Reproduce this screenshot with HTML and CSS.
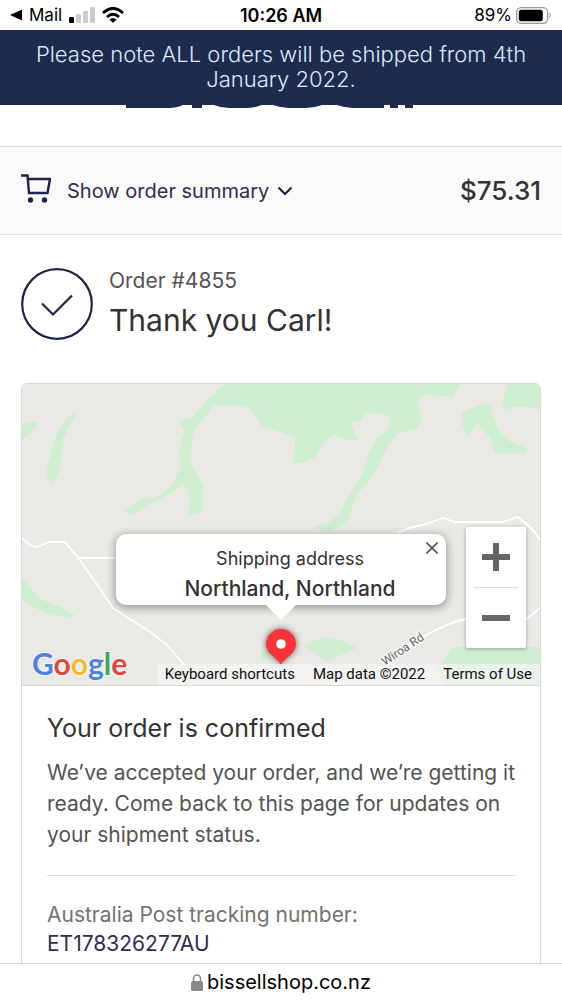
FILE: index.html
```html
<!DOCTYPE html>
<html lang="en">
<head>
  <meta charset="UTF-8" />
  <meta name="viewport" content="width=device-width, initial-scale=1.0" />
  <title>Thank you Carl! - Order #4855</title>
  <link rel="stylesheet" href="styles.css">
</head>
<body>
  <div class="statusbar">
    <div class="status-left">
      <svg width="12" height="12" viewBox="0 0 12 12"><path d="M0 6 L12 0.5 V11.500 Z" fill="#000"/></svg>
      <span>Mail</span>
      <svg class="signal" width="26" height="16" viewBox="0 0 26 16">
        <rect x="0" y="10" width="5" height="6" rx="1" fill="#000"/>
        <rect x="7" y="7" width="5" height="9" rx="1" fill="#ccc"/>
        <rect x="14" y="4" width="5" height="12" rx="1" fill="#ccc"/>
        <rect x="21" y="0" width="5" height="16" rx="1" fill="#ccc"/>
      </svg>
      <svg width="22" height="16" viewBox="0 0 22 16" fill="none" stroke="#000" stroke-width="3">
        <path d="M1 6 Q11 -3 21 6"/>
        <path d="M5 10 Q11 4.500 17 10"/>
        <path d="M11 16 L7.500 12.500 Q11 9.800 14.500 12.500 Z" fill="#000" stroke="none"/>
      </svg>
    </div>
    <div class="clock">10:26 AM</div>
    <div class="status-right">
      <span>89%</span>
      <svg width="36" height="17" viewBox="0 0 36 17">
        <rect x="0.700" y="0.700" width="31" height="15.600" rx="4.500" fill="none" stroke="#999" stroke-width="1.300"/>
        <rect x="2.800" y="2.800" width="24" height="11.400" rx="2.500" fill="#000"/>
        <path d="M33.500 5.500 Q35.800 8.500 33.500 11.500 Z" fill="#999"/>
      </svg>
    </div>
  </div>

  <main class="page">
    <div class="notice">Please note ALL orders will be shipped from 4th January 2022.</div>
    <header class="brand">
      <svg width="290" height="4" viewBox="0 0 290 4" fill="#1d2b4f">
        <path d="M1 0 H58 Q52 3 44 3 H1 Z"/>
        <path d="M67 0 H77 V3 H67 Z"/>
        <path d="M89 0 H137 Q129 3 121 3 H104 Q96 3 89 0 Z"/>
        <path d="M148 0 H197 Q189 3 181 3 H164 Q156 3 148 0 Z"/>
        <path d="M212 0 H259 V3 H228 Q220 3 212 0 Z"/>
        <path d="M265 0 H273 V3 H265 Z"/>
        <path d="M280 0 H288 V3 H280 Z"/>
      </svg>
    </header>

    <button class="summary" type="button">
      <svg class="cart" width="30" height="30" viewBox="0 0 30 30" fill="none" stroke="#1d2450" stroke-width="2.400">
        <path d="M0 1.500 H6.500 L8 19 H26.500 L29 5 H7"/>
        <circle cx="9.500" cy="26" r="2.700" fill="#1d2450" stroke="none"/>
        <circle cx="23.500" cy="26" r="2.700" fill="#1d2450" stroke="none"/>
      </svg>
      <span class="summary-label">Show order summary</span>
      <svg width="16" height="10" viewBox="0 0 16 10" fill="none" stroke="#1d2450" stroke-width="2.200"><path d="M1.500 1.500 L8 8 L14.500 1.500"/></svg>
      <span class="total">$75.31</span>
    </button>

    <div class="thanks">
      <svg width="72" height="72" viewBox="0 0 72 72" fill="none" stroke="#1f2547" stroke-width="2.200">
        <circle cx="36" cy="36" r="34.800"/>
        <path d="M21 35.500 L32 46.500 L51 27.500"/>
      </svg>
      <div>
        <p class="order-number">Order #4855</p>
        <h1>Thank you Carl!</h1>
      </div>
    </div>

    <section class="card">
      <div class="map">
        <svg class="terrain" viewBox="22 384 518 301" preserveAspectRatio="xMidYMid slice">
          <g fill="#cdeecf">
            <path d="M22 424 L35 421 L38 424 L31 433 L22 439 Z"/>
            <path d="M76 414 L70 425 L64 437 L61 456 L60 468 L54 484 L48 479 L46 469 L52 450 L55 438 L62 425 L73 412 Z"/>
            <path d="M225 384 H461 L453 397 L440 396 L423 394 L417 403 L422 417 L418 428 L397 434 L387 447 L377 468 L368 483 L358 493 L352 508 L347 523 L330 531 L313 527 L330 522 L340 512 L350 493 L362 475 L368 455 L377 437 L388 430 L391 417 L380 413 L365 413 L362 420 L350 423 L358 440 L350 441 L335 435 L323 443 L315 457 L305 462 L293 463 L295 447 L295 437 L280 432 L263 427 L250 408 L230 405 L213 406 L193 433 L190 455 L192 467 L203 485 L202 513 L187 515 L190 502 L188 490 L183 485 L162 499 L147 505 L133 515 L123 512 L142 498 L157 498 L173 483 L180 468 L179 450 L185 430 L178 421 L192 418 L207 400 Z"/>
            <path d="M462 412 L487 403 L491 408 L497 427 L507 440 L528 449 L525 453 H495 L490 438 L478 423 L468 437 L461 422 Z"/>
            <path d="M507 384 H540 V410 Q522 403 503 410 L504 395 Z"/>
            <path d="M22 578 L33 590 L38 598 L60 607 L75 615 L67 618 L43 612 L22 600 Z"/>
            <path d="M303 646 L323 637 L338 639 L357 648 L327 661 Z"/>
            <path d="M261 652 L268 648 L270 658 L262 660 Z"/>
            <path d="M453 647 H540 V685 H445 L436 671 Z"/>
          </g>
          <g fill="none" stroke="#fff" stroke-width="1.800" stroke-linejoin="round">
            <path d="M22 538 L30 545 L37 547 L50 542 H65 L80 560 L113 608 L150 632 L167 645 L185 666"/>
            <path d="M79 558 H118"/>
            <path d="M397 533 Q410 527 423 525 L443 518 L455 522 H503 L518 517 L530 527 Q536 533 540 540"/>
            <path d="M540 608 L527 619 Q495 612 465 619 Q445 624 423 637 L383 664"/>
          </g>
          <text class="road" x="385" y="666" transform="rotate(-34 385 666)">Wiroa Rd</text>
        </svg>

        <svg class="pin" width="40" height="44" viewBox="0 0 40 44">
          <path d="M20 38 C17 31 5 27 5 17 A15 15 0 0 1 35 17 C35 27 23 31 20 38 Z" fill="#fb3237"/>
          <circle cx="20" cy="17" r="4.800" fill="#fff"/>
        </svg>

        <div class="bubble">
          <p class="bubble-label">Shipping address</p>
          <p class="bubble-place">Northland, Northland</p>
          <button class="close" type="button" aria-label="Close">
            <svg width="12" height="12" viewBox="0 0 12 12" stroke="#555" stroke-width="1.600"><path d="M0.500 0.500 L11.500 11.500 M11.500 0.500 L0.500 11.500"/></svg>
          </button>
        </div>

        <div class="zoom">
          <button type="button" aria-label="Zoom in">
            <svg width="28" height="28" viewBox="0 0 28 28" fill="#666"><path d="M11 0 H17 V11 H28 V17 H17 V28 H11 V17 H0 V11 H11 Z"/></svg>
          </button>
          <button type="button" aria-label="Zoom out">
            <svg width="28" height="28" viewBox="0 0 28 28" fill="#666"><path d="M0 11 H28 V17 H0 Z"/></svg>
          </button>
        </div>

        <a class="google" href="#"><span class="blue">G</span><span class="red">o</span><span class="yellow">o</span><span class="blue">g</span><span class="green">l</span><span class="red">e</span></a>

        <div class="attribution">
          <button type="button">Keyboard shortcuts</button>
          <span>Map data ©2022</span>
          <a href="#">Terms of Use</a>
        </div>
      </div>

      <div class="card-body">
        <h2>Your order is confirmed</h2>
        <p class="message">We’ve accepted your order, and we’re getting it ready. Come back to this page for updates on your shipment status.</p>
        <div class="tracking">
          <p class="tracking-label">Australia Post tracking number:</p>
          <a href="#">ET178326277AU</a>
        </div>
      </div>
    </section>
  </main>

  <footer class="urlbar">
    <svg width="12" height="17" viewBox="0 0 12 17">
      <path d="M2.500 8 V4.500 A3.500 3.500 0 0 1 9.500 4.500 V8" fill="none" stroke="#8a8a8a" stroke-width="1.500"/>
      <rect x="0" y="7" width="12" height="10" rx="1.500" fill="#8a8a8a"/>
    </svg>
    <span>bissellshop.co.nz</span>
  </footer>
</body>
</html>
```
FILE: styles.css
```css
* {
  box-sizing: border-box;
}
body {
  margin: 0;
  height: 100vh;
  display: flex;
  flex-direction: column;
  overflow: hidden;
  background: #fff;
  color: #333;
  font-family: Inter, "Liberation Sans", sans-serif;
  font-size: 20px;
}
h1, h2, p {
  margin: 0;
  font-weight: 400;
}
a {
  color: inherit;
  text-decoration: none;
}
button {
  margin: 0;
  padding: 0;
  border: none;
  background: none;
  color: inherit;
  font: inherit;
  cursor: pointer;
}
svg {
  display: block;
  flex: none;
}

/* Phone status bar */
.statusbar {
  flex: none;
  display: grid;
  grid-template-columns: 1fr auto 1fr;
  align-items: center;
  height: 30px;
  padding: 0 10px;
  color: #000;
  font-size: 17px;
}
.status-left,
.status-right {
  display: flex;
  align-items: center;
  gap: 7px;
}
.status-right {
  justify-content: flex-end;
  gap: 4px;
}
.clock {
  font-size: 18px;
  font-weight: 600;
}

.page {
  flex: 1;
  min-height: 0;
  overflow: hidden;
}
.notice {
  padding: 12px 20px 13px;
  background: #1d2b4f;
  color: #dfe8fb;
  font-size: 22px;
  font-weight: 300;
  line-height: 25px;
  text-align: center;
}
.brand {
  display: flex;
  justify-content: center;
  height: 41px;
  padding-right: 22px;
}

/* Order summary toggle */
.summary {
  display: flex;
  align-items: center;
  width: 100%;
  height: 89px;
  padding: 0 21px;
  border-top: 1px solid #e0e0e0;
  border-bottom: 1px solid #e0e0e0;
  background: #fafafa;
  color: #2c3050;
}
.cart {
  margin: 0 16px 4px 0;
}
.summary-label {
  margin-right: 8px;
}
.total {
  margin-left: auto;
  color: #333;
  font-size: 26px;
  font-weight: 500;
}

.thanks {
  display: flex;
  align-items: center;
  gap: 16px;
  padding: 33px 21px 43px;
}
.order-number {
  margin-bottom: 6px;
  color: #545454;
  font-size: 21px;
  line-height: 26px;
}
h1 {
  font-size: 30px;
  line-height: 40px;
}

.card {
  margin: 0 21px;
  border: 1px solid #d9d9d9;
  border-radius: 6px;
  overflow: hidden;
}
.map {
  position: relative;
  height: 302px;
  border-bottom: 1px solid #d9d9d9;
  background: #eae9e6;
}
.terrain {
  width: 100%;
  height: 100%;
}
.road {
  fill: #666;
  stroke: #f5f5f5;
  stroke-width: 3px;
  paint-order: stroke;
  font-family: Roboto, sans-serif;
  font-size: 12px;
}
.pin {
  position: absolute;
  left: 50%;
  bottom: 14px;
  transform: translateX(-50%);
  filter: drop-shadow(0 0 3px rgba(0, 0, 0, 0.6));
}
.bubble {
  position: absolute;
  left: 50%;
  bottom: 80px;
  transform: translateX(-50%);
  width: 330px;
  height: 71px;
  padding: 10px 8px 0 26px;
  border-radius: 10px;
  background: #fff;
  box-shadow: 0 2px 8px 1px rgba(0, 0, 0, 0.35);
  text-align: center;
}
.bubble::after {
  content: "";
  position: absolute;
  left: 50%;
  top: 100%;
  transform: translateX(-50%);
  border: 15px solid transparent;
  border-bottom-width: 0;
  border-top-color: #fff;
}
.bubble-label {
  font-size: 18px;
  line-height: 30px;
}
.bubble-place {
  font-size: 21px;
  font-weight: 500;
  line-height: 30px;
}
.close {
  position: absolute;
  top: 8px;
  right: 8px;
}
.zoom {
  position: absolute;
  right: 14px;
  bottom: 37px;
  width: 60px;
  padding: 0 8px;
  border-radius: 2px;
  background: #fff;
  box-shadow: 0 1px 4px rgba(0, 0, 0, 0.3);
}
.zoom button {
  display: flex;
  align-items: center;
  justify-content: center;
  width: 100%;
  height: 60px;
}
.zoom button + button {
  height: 61px;
  border-top: 1px solid #e0e0e0;
}
.google {
  position: absolute;
  left: 10px;
  bottom: 4px;
  font-family: Lato, sans-serif;
  font-size: 30px;
  font-weight: 700;
  line-height: 36px;
  text-shadow: 0 0 2px #fff, 0 0 2px #fff;
}
.blue { color: #4a83e0; }
.red { color: #da4a3e; }
.yellow { color: #f0bb2c; }
.green { color: #3aa75a; }
.attribution {
  position: absolute;
  right: 0;
  bottom: 0;
  display: flex;
  gap: 18px;
  padding: 0 8px 0 7px;
  background: rgba(245, 245, 245, 0.7);
  color: #111;
  font-family: Roboto, sans-serif;
  font-size: 15px;
  line-height: 21px;
}

.card-body {
  padding: 24px 24px 24px 25px;
}
h2 {
  margin: 0 0 11px;
  font-size: 25px;
  line-height: 36px;
}
.message {
  padding-bottom: 25px;
  border-bottom: 1px solid #e0e0e0;
  color: #545454;
  font-size: 21px;
  line-height: 31px;
}
.tracking {
  padding-top: 24px;
  font-size: 21px;
  line-height: 29px;
}
.tracking-label {
  color: #737373;
}
.tracking a {
  color: #2c3050;
}

/* Browser address bar */
.urlbar {
  flex: none;
  display: flex;
  align-items: center;
  justify-content: center;
  gap: 4px;
  height: 37px;
  border-top: 1px solid #d0d0d0;
  color: #000;
}
```
